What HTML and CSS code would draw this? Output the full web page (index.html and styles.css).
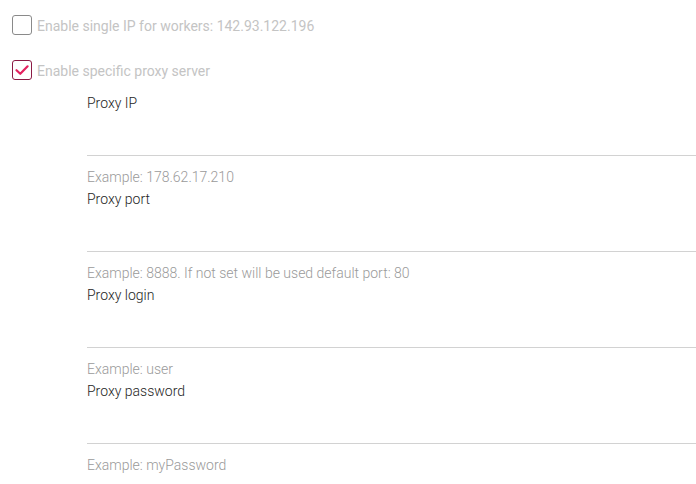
FILE: index.html
```html
<!DOCTYPE html>
<html>
<head>
<meta charset="utf-8">
<link rel="stylesheet" href="styles.css">
</head>
<body>
<div class="page">
  <label class="check-row">
    <span class="box"></span>
    <span class="check-text">Enable single IP for workers: 142.93.122.196</span>
  </label>
  <label class="check-row">
    <span class="box checked">
      <svg viewBox="0 0 20 20" width="20" height="20"><path d="M4.5 10.2 L8.3 13.8 L15.6 6.3" fill="none" stroke="#e4215f" stroke-width="2.2" stroke-linecap="round" stroke-linejoin="round"/></svg>
    </span>
    <span class="check-text">Enable specific proxy server</span>
  </label>
  <div class="fields">
    <div class="field">
      <div class="field-label">Proxy IP</div>
      <div class="field-input"></div>
      <div class="field-hint">Example: 178.62.17.210</div>
    </div>
    <div class="field">
      <div class="field-label">Proxy port</div>
      <div class="field-input"></div>
      <div class="field-hint">Example: 8888. If not set will be used default port: 80</div>
    </div>
    <div class="field">
      <div class="field-label">Proxy login</div>
      <div class="field-input"></div>
      <div class="field-hint">Example: user</div>
    </div>
    <div class="field">
      <div class="field-label">Proxy password</div>
      <div class="field-input"></div>
      <div class="field-hint">Example: myPassword</div>
    </div>
  </div>
</div>
</body>
</html>
```
FILE: styles.css
```css
html, body {
  margin: 0;
  padding: 0;
  background: #ffffff;
  font-family: Roboto, "Noto Sans", sans-serif;
  overflow: hidden;
}
.page {
  padding: 15px 0 0 12px;
}
.check-row {
  display: flex;
  align-items: center;
  gap: 5px;
  height: 20px;
  margin-bottom: 25px;
}
.box {
  box-sizing: border-box;
  width: 20px;
  height: 20px;
  border: 1.5px solid #8a8a8a;
  border-radius: 3px;
  display: flex;
  align-items: center;
  justify-content: center;
  flex: none;
}
.box svg {
  display: block;
  flex: none;
}
.box.checked {
  border-color: #8c1b45;
}
.check-text {
  font-size: 14px;
  color: #c4c4c4;
  line-height: 20px;
  padding-top: 2px;
}
.fields {
  margin-top: -12px;
  padding-left: 75px;
}
.field-label {
  font-size: 14px;
  font-weight: 300;
  color: #1e1e1e;
  line-height: 20px;
}
.field-input {
  height: 42px;
  border-bottom: 1px solid #d2d2d2;
}
.field-hint {
  font-size: 14px;
  font-weight: 300;
  color: #9a9a9a;
  line-height: 22px;
  padding-top: 10px;
  padding-bottom: 1px;
}
```
